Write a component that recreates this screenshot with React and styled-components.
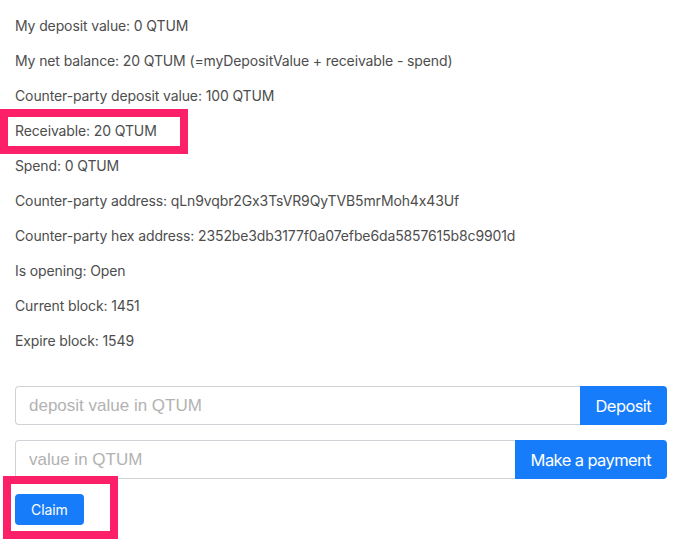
import React from "react";
import styled, { createGlobalStyle, css } from "styled-components";

const Global = createGlobalStyle`
  html, body { margin: 0; padding: 0; background: #fff; }
  body { font-family: Inter, "Noto Sans", sans-serif; color: #4d4d4d; }
  * { box-sizing: border-box; }
`;

const Page = styled.div`
  position: relative;
  width: 682px;
  height: 546px;
  overflow: hidden;
  padding: 15px 15px 0;
`;

const Info = styled.div`
  display: flex;
  flex-direction: column;
`;

const Line = styled.p`
  margin: 0 0 14px;
  font-size: 14px;
  line-height: 21px;
  letter-spacing: -0.12px;
  white-space: nowrap;
`;

const Form = styled.div`
  margin-top: 21px;
  display: flex;
  flex-direction: column;
  align-items: flex-start;
  gap: 15px;
`;

const Group = styled.div`
  display: flex;
  width: 100%;
  height: 39px;
`;

const Input = styled.input`
  flex: 1;
  min-width: 0;
  height: 39px;
  padding: 0 13px;
  font-family: "Liberation Sans", Arial, sans-serif;
  font-size: 17px;
  color: #495057;
  border: 1px solid #cfd3d7;
  border-right: none;
  border-radius: 4px 0 0 4px;
  outline: none;
  &::placeholder { color: #b2b2b2; }
`;

const Button = styled.button`
  border: none;
  background: #177cfa;
  color: #fff;
  font-family: Inter, "Noto Sans", sans-serif;
  white-space: nowrap;
  cursor: pointer;
  ${(p) =>
    p.$small
      ? css`
          font-size: 14px;
          letter-spacing: -0.1px;
          height: 31px;
          padding: 0 16px;
          border-radius: 4px;
        `
      : css`
          font-size: 16.5px;
          letter-spacing: -0.6px;
          height: 39px;
          padding: 0 16px;
          border-radius: 0 4px 4px 0;
        `}
`;

const Highlight = styled.div`
  position: absolute;
  border: 8px solid #fb2067;
  pointer-events: none;
`;

const ReceivableMark = styled(Highlight)`
  left: 0;
  top: 109px;
  width: 188px;
  height: 45px;
`;

const ClaimMark = styled(Highlight)`
  left: 3px;
  top: 476px;
  width: 115px;
  height: 63px;
`;

const lines = [
  "My deposit value: 0 QTUM",
  "My net balance: 20 QTUM (=myDepositValue + receivable - spend)",
  "Counter-party deposit value: 100 QTUM",
  "Receivable: 20 QTUM",
  "Spend: 0 QTUM",
  "Counter-party address: qLn9vqbr2Gx3TsVR9QyTVB5mrMoh4x43Uf",
  "Counter-party hex address: 2352be3db3177f0a07efbe6da5857615b8c9901d",
  "Is opening: Open",
  "Current block: 1451",
  "Expire block: 1549",
];

export default function App() {
  return (
    <>
      <Global />
      <Page>
        <Info>
          {lines.map((l) => (
            <Line key={l}>{l}</Line>
          ))}
        </Info>
        <Form>
          <Group>
            <Input placeholder="deposit value in QTUM" />
            <Button>Deposit</Button>
          </Group>
          <Group>
            <Input placeholder="value in QTUM" />
            <Button>Make a payment</Button>
          </Group>
          <Button $small>Claim</Button>
        </Form>
        <ReceivableMark />
        <ClaimMark />
      </Page>
    </>
  );
}
